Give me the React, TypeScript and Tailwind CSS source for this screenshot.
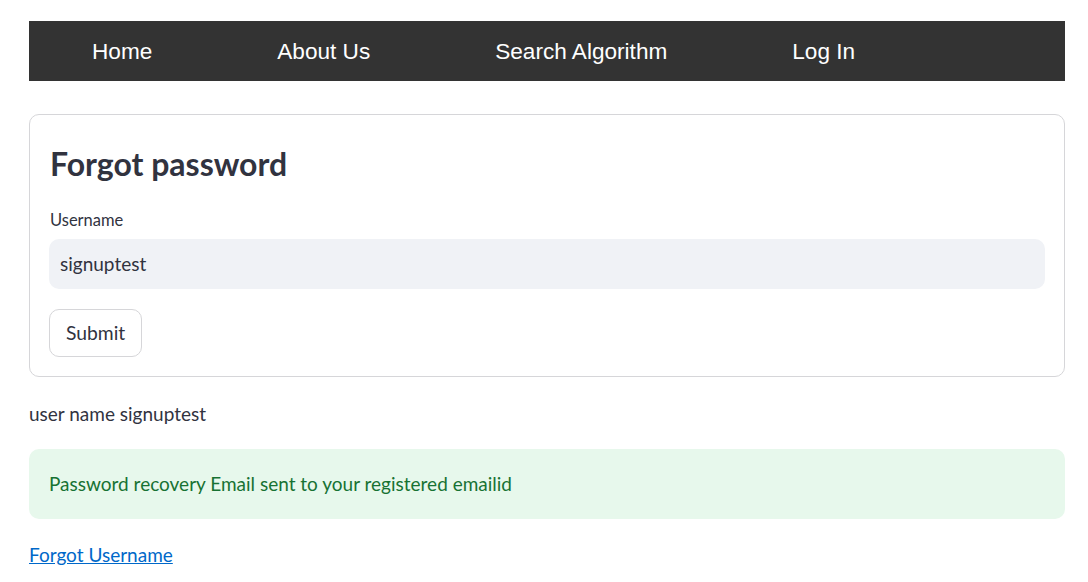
export default function App() {
  const navItems = ['Home', 'About Us', 'Search Algorithm', 'Log In']

  return (
    <div
      className="min-h-screen bg-white pt-[21px] pl-[29px] pr-[23px] text-[#31333f]"
      style={{ fontFamily: 'Lato, "Noto Sans", sans-serif' }}
    >
      <nav
        className="flex h-[60px] items-center gap-[125px] bg-[#333333] pt-[2px] pl-[63px] text-[22.6px] text-white"
        style={{ fontFamily: '"Liberation Sans", Arial, sans-serif' }}
      >
        {navItems.map(item => (
          <a key={item} className="whitespace-nowrap">
            {item}
          </a>
        ))}
      </nav>

      <div className="mt-[33px] rounded-[10px] border border-[#d6d6d9] px-[19px] pt-[28px] pb-[19px]">
        <h3 className="pl-[1px] text-[32px] font-bold leading-[42px]">Forgot password</h3>
        <label className="mt-[25px] block pl-[1px] text-[16.5px] leading-[21px]">Username</label>
        <div className="mt-[8px] flex h-[50px] items-center rounded-[10px] bg-[#f0f2f6] px-[11px] pt-[1px] text-[19px]">
          signuptest
        </div>
        <button className="mt-[20px] h-[48px] rounded-[10px] border border-[#d6d6d9] bg-white px-[16px] pt-[1px] text-[19.3px]">
          Submit
        </button>
      </div>

      <p className="mt-[22px] text-[19px] leading-[30px]">user name signuptest</p>

      <div className="mt-[20px] flex h-[70px] items-center rounded-[10px] bg-[#e7f8ec] px-[20px] text-[19px] text-[#177233]">
        Password recovery Email sent to your registered emailid
      </div>

      <a className="mt-[21px] block text-[19px] leading-[30px] text-[#0068c9] underline">Forgot Username</a>
    </div>
  )
}
